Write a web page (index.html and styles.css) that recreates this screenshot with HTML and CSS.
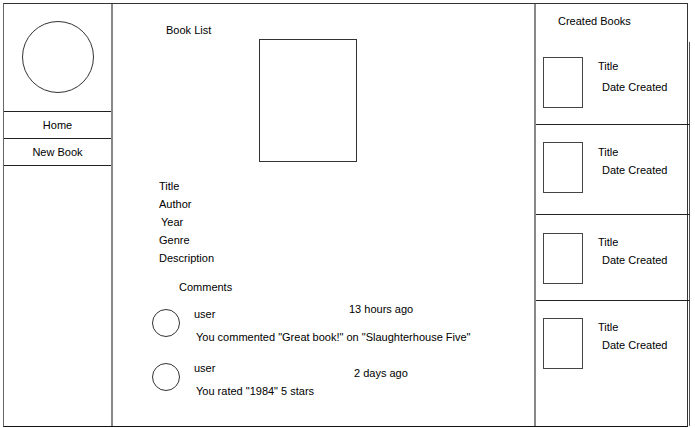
FILE: index.html
```html
<!DOCTYPE html>
<html lang="en">
<head>
    <meta charset="UTF-8">
    <meta name="viewport" content="width=device-width, initial-scale=1.0">
    <title>Book List Wireframe</title>
    <link rel="stylesheet" href="styles.css">
</head>
<body>
    <div class="frame">
        <aside class="sidebar">
            <div class="profile">
                <div class="profile-pic"></div>
            </div>
            <nav class="nav">
                <div class="nav-item">Home</div>
                <div class="nav-item">New Book</div>
            </nav>
        </aside>

        <main class="main">
            <div class="book-head">
                <div class="page-title">Book List</div>
                <div class="cover"></div>
            </div>

            <div class="fields">
                <div>Title</div>
                <div>Author</div>
                <div class="indent">Year</div>
                <div>Genre</div>
                <div>Description</div>
            </div>

            <div class="comments-title">Comments</div>

            <div class="comment comment-first">
                <div class="avatar"></div>
                <div class="comment-body">
                    <div class="comment-meta">
                        <span class="user">user</span>
                        <span class="time">13 hours ago</span>
                    </div>
                    <div class="message">You commented "Great book!" on "Slaughterhouse Five"</div>
                </div>
            </div>

            <div class="comment comment-second">
                <div class="avatar"></div>
                <div class="comment-body">
                    <div class="comment-meta">
                        <span class="user">user</span>
                        <span class="time">2 days ago</span>
                    </div>
                    <div class="message">You rated "1984" 5 stars</div>
                </div>
            </div>
        </main>

        <aside class="created">
            <div class="created-title">Created Books</div>
            <div class="created-row">
                <div class="thumb"></div>
                <div class="created-info">
                    <div>Title</div>
                    <div class="date">Date Created</div>
                </div>
            </div>
            <div class="created-row">
                <div class="thumb"></div>
                <div class="created-info">
                    <div>Title</div>
                    <div class="date">Date Created</div>
                </div>
            </div>
            <div class="created-row">
                <div class="thumb"></div>
                <div class="created-info">
                    <div>Title</div>
                    <div class="date">Date Created</div>
                </div>
            </div>
            <div class="created-row">
                <div class="thumb"></div>
                <div class="created-info">
                    <div>Title</div>
                    <div class="date">Date Created</div>
                </div>
            </div>
        </aside>
    </div>
</body>
</html>
```

FILE: styles.css
```css
body {
    margin: 0;
    font-family: "Liberation Sans", Arial, sans-serif;
    font-size: 11px;
    line-height: 14px;
    color: #000;
    background: #fff;
}

.frame {
    box-sizing: border-box;
    display: flex;
    width: 685px;
    height: 424px;
    margin: 3px 0 0 3px;
    border: 1px solid #333;
    border-left-color: #666;
    border-bottom-color: #111;
}

/* left column */
.sidebar {
    box-sizing: border-box;
    width: 109px;
    flex-shrink: 0;
    border-right: 2px solid #888;
}

.profile {
    height: 107px;
    padding: 17px 0 0 18px;
    box-sizing: border-box;
}

.profile-pic {
    width: 72px;
    height: 72px;
    box-sizing: border-box;
    border: 1px solid #333;
    border-radius: 50%;
}

.nav-item {
    height: 27px;
    box-sizing: border-box;
    border-top: 1px solid #222;
    display: flex;
    align-items: center;
    justify-content: center;
}

.nav-item:last-child {
    border-bottom: 1px solid #222;
    height: 28px;
}

/* middle column */
.main {
    flex: 1;
}

.book-head {
    display: flex;
    align-items: flex-start;
}

.page-title {
    width: 93px;
    margin: 19px 0 0 53px;
}

.cover {
    width: 98px;
    height: 123px;
    box-sizing: border-box;
    margin-top: 35px;
    border: 1px solid #333;
}

.fields {
    margin: 15px 0 0 46px;
    line-height: 18px;
}

.fields .indent {
    padding-left: 2px;
}

.comments-title {
    margin: 13px 0 0 66px;
}

.comment {
    display: flex;
    align-items: flex-start;
    padding-left: 39px;
}

.avatar {
    width: 28px;
    height: 28px;
    flex-shrink: 0;
    box-sizing: border-box;
    border: 1px solid #333;
    border-radius: 50%;
}

.comment-body {
    margin-left: 14px;
}

.comment-meta {
    display: flex;
    align-items: flex-start;
}

.user {
    width: 155px;
}

.message {
    padding-left: 2px;
}

.comment-first {
    margin-top: 8px;
}

.comment-first .avatar {
    margin-top: 7px;
}

.comment-first .user {
    margin-top: 5px;
}

.comment-first .message {
    margin-top: 9px;
}

.comment-second {
    margin-top: 17px;
}

.comment-second .avatar {
    margin-top: 2px;
}

.comment-second .time {
    margin: 5px 0 0 5px;
}

.comment-second .message {
    margin-top: 4px;
}

/* right column */
.created {
    box-sizing: border-box;
    width: 153px;
    flex-shrink: 0;
    border-left: 2px solid #888;
    display: flex;
    flex-direction: column;
}

.created-title {
    height: 38px;
    box-sizing: border-box;
    padding: 10px 0 0 22px;
}

.created-row {
    box-sizing: border-box;
    display: flex;
    align-items: flex-start;
    padding: 17px 0 0 7px;
    margin-right: -3px;
    border-right: 1px solid #555;
    border-bottom: 1px solid #222;
}

.created-row:nth-child(2) {
    height: 83px;
    padding-top: 15px;
}

.created-row:nth-child(3) {
    height: 90px;
    padding-top: 17px;
}

.created-row:nth-child(4) {
    height: 86px;
    padding-top: 18px;
}

.created-row:last-child {
    flex: 1;
    border-bottom: none;
}

.thumb {
    width: 40px;
    height: 51px;
    box-sizing: border-box;
    flex-shrink: 0;
    border: 1px solid #444;
}

.created-info {
    margin: 2px 0 0 15px;
}

.created-info .date {
    margin-top: 4px;
    padding-left: 4px;
}

.created-row:nth-child(2) .date {
    margin-top: 7px;
}

.created-row:nth-child(3) .created-info {
    margin-top: 3px;
}
```
